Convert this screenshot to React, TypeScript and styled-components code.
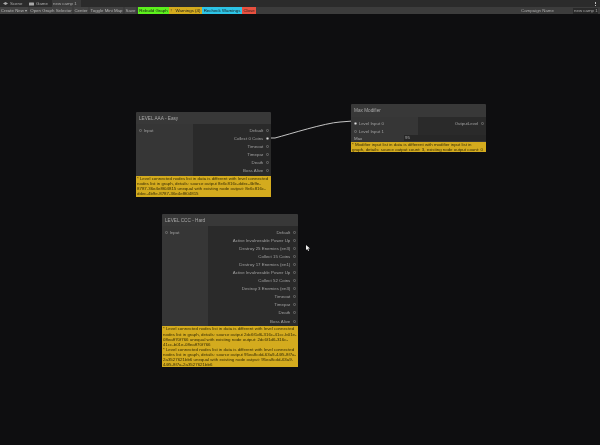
import styled, { createGlobalStyle } from 'styled-components';

const GlobalStyle = createGlobalStyle`
  html, body {
    margin: 0;
    padding: 0;
    background: #0e0e10;
    overflow: hidden;
  }
`;

const Page = styled.div`
  width: 600px;
  height: 445px;
  display: flex;
  flex-direction: column;
  font-family: "Liberation Sans", Arial, sans-serif;
  font-size: 4.4px;
  color: #ababab;
  background: #0e0e10;
  overflow: hidden;
  filter: blur(0.3px);
`;

const TabBar = styled.div`
  height: 7px;
  display: flex;
  align-items: stretch;
  background: #2b2b2b;
`;

const Tab = styled.div<{ $width: number; $active?: boolean }>`
  display: flex;
  align-items: center;
  gap: 2px;
  padding-left: ${({ $active }) => ($active ? '1px' : '3px')};
  width: ${({ $width }) => $width}px;
  background: ${({ $active }) => ($active ? '#3a3a3a' : 'transparent')};
  box-sizing: border-box;
`;

const TabIcon = styled.svg`
  width: 5px;
  height: 4px;
  fill: #a8a8a8;
`;

const MoreDots = styled.div`
  margin-left: auto;
  margin-right: 4px;
  align-self: center;
  width: 1px;
  height: 4px;
  background: repeating-linear-gradient(#bdbdbd 0 1px, transparent 1px 1.5px);
`;

const Toolbar = styled.div`
  height: 7px;
  display: flex;
  align-items: stretch;
  background: #3c3c3c;
`;

const ToolButton = styled.div<{ $width: number }>`
  display: flex;
  align-items: center;
  justify-content: center;
  width: ${({ $width }) => $width}px;
  margin-right: 2px;
  background: #434343;
  color: #b4b4b4;
  white-space: nowrap;
`;

const ColorButton = styled.div<{ $bg: string; $width: number }>`
  display: flex;
  align-items: center;
  justify-content: center;
  width: ${({ $width }) => $width}px;
  background: ${({ $bg }) => $bg};
  color: #1c1c1c;
  white-space: nowrap;
`;

const CampaignField = styled.div`
  margin-left: auto;
  display: flex;
  align-items: center;
  color: #a8a8a8;
  white-space: nowrap;
`;

const CampaignLabel = styled.span`
  width: 52px;
`;

const CampaignInput = styled.span`
  width: 25px;
  padding-left: 1px;
  box-sizing: border-box;
  background: #2a2a2a;
  line-height: 6px;
  margin-right: 2px;
`;

const Canvas = styled.div`
  position: relative;
  flex: 1;
`;

const Wire = styled.svg`
  position: absolute;
  left: 0;
  top: 0;
  width: 600px;
  height: 431px;
  pointer-events: none;
`;

const Node = styled.div<{ $x: number; $y: number; $width: number }>`
  position: absolute;
  left: ${({ $x }) => $x}px;
  top: ${({ $y }) => $y}px;
  width: ${({ $width }) => $width}px;
  display: flex;
  flex-direction: column;
`;

const NodeHeader = styled.div<{ $height: number }>`
  height: ${({ $height }) => $height}px;
  display: flex;
  align-items: center;
  padding-left: 3px;
  background: #383838;
  color: #a8a8a8;
  font-size: 4.7px;
  border-radius: 1px 1px 0 0;
`;

const NodeBody = styled.div`
  display: flex;
`;

const InColumn = styled.div<{ $width: number }>`
  width: ${({ $width }) => $width}px;
  display: flex;
  flex-direction: column;
  padding-top: 2px;
  background: #363636;
`;

const OutColumn = styled.div`
  flex: 1;
  display: flex;
  flex-direction: column;
  padding-top: 2px;
  padding-bottom: 1px;
  background: #2a2a2a;
`;

const PortRow = styled.div<{ $out?: boolean }>`
  height: 8.1px;
  display: flex;
  align-items: center;
  justify-content: flex-end;
  flex-direction: ${({ $out }) => ($out ? 'row' : 'row-reverse')};
  gap: 2.2px;
  padding: 0 2.5px;
  white-space: nowrap;
  color: #a0a0a0;
`;

const PinIcon = styled.svg`
  width: 3px;
  height: 3px;
  flex: none;
`;

const FieldRow = styled.div`
  height: 6.5px;
  display: flex;
  align-items: center;
  padding-left: 3px;
  background: #363636;
`;

const FieldLabel = styled.span`
  width: 50px;
`;

const FieldInput = styled.span`
  flex: 1;
  padding-left: 1px;
  line-height: 6px;
  background: #272727;
`;

const Warning = styled.div`
  background: #d4ab1e;
  color: #352c06;
  font-size: 4.4px;
  line-height: 5.1px;
  padding: 0.3px 1px;
`;

const Cursor = styled.svg`
  position: absolute;
  left: 306px;
  top: 231px;
  width: 4px;
  height: 6px;
`;

const aaaOutputs = ['Default', 'Collect 0 Coins', 'Timeout', 'Timepar', 'Death', 'Boss Alive'];
const cccOutputs = [
  'Default',
  'Active Invulnerable Power Up',
  'Destroy 25 Enemies (en3)',
  'Collect 15 Coins',
  'Destroy 17 Enemies (en1)',
  'Active Invulnerable Power Up',
  'Collect 52 Coins',
  'Destroy 3 Enemies (en3)',
  'Timeout',
  'Timepar',
  'Death',
  'Boss Alive',
];

function Pin({ filled }: { filled?: boolean }) {
  return (
    <PinIcon viewBox="0 0 6 6">
      <circle
        cx="3"
        cy="3"
        r="2.2"
        fill={filled ? '#dcdcdc' : 'none'}
        stroke="#a8a8a8"
        strokeWidth="0.9"
      />
    </PinIcon>
  );
}

function Port({ label, filled, input }: { label: string; filled?: boolean; input?: boolean }) {
  return (
    <PortRow $out={!input}>
      {label}
      <Pin filled={filled} />
    </PortRow>
  );
}

export default function App() {
  return (
    <Page>
      <GlobalStyle />
      <TabBar>
        <Tab $width={26}>
          <TabIcon viewBox="0 0 10 8"><path d="M5 0l5 3-5 3-5-3z" /></TabIcon>
          Scene
        </Tab>
        <Tab $width={26}>
          <TabIcon viewBox="0 0 10 8"><path d="M1 1h8a1 1 0 0 1 1 1v4a1 1 0 0 1-1 1H1a1 1 0 0 1-1-1V2a1 1 0 0 1 1-1z" /></TabIcon>
          Game
        </Tab>
        <Tab $width={29} $active>new camp 1</Tab>
        <MoreDots />
      </TabBar>
      <Toolbar>
        <ToolButton $width={28}>Create New ▾</ToolButton>
        <ToolButton $width={42}>Open Graph Selector</ToolButton>
        <ToolButton $width={14}>Center</ToolButton>
        <ToolButton $width={33}>Toggle Mini Map</ToolButton>
        <ToolButton $width={11}>Save</ToolButton>
        <ColorButton $bg="#5cf11c" $width={31}>Rebuild Graph</ColorButton>
        <ColorButton $bg="#d4ab1e" $width={33}>!&nbsp;&nbsp;&nbsp;Warnings (4)</ColorButton>
        <ColorButton $bg="#2dc4e6" $width={40}>Recheck Warnings</ColorButton>
        <ColorButton $bg="#e8503f" $width={14}>Close</ColorButton>
        <CampaignField>
          <CampaignLabel>Campaign Name</CampaignLabel>
          <CampaignInput>new camp 1</CampaignInput>
        </CampaignField>
      </Toolbar>
      <Canvas>
        <Wire viewBox="0 0 600 431">
          <path
            d="M268 124 L275 124 C 290 120 325 109 340 108 L353 107"
            fill="none"
            stroke="#d8d8d8"
            strokeWidth="0.9"
          />
        </Wire>

        <Node $x={136} $y={98} $width={135}>
          <NodeHeader $height={12}>LEVEL AAA - Easy</NodeHeader>
          <NodeBody>
            <InColumn $width={57}>
              <Port label="Input" input />
            </InColumn>
            <OutColumn>
              {aaaOutputs.map((label) => (
                <Port key={label} label={label} filled={label === 'Collect 0 Coins'} />
              ))}
            </OutColumn>
          </NodeBody>
          <Warning>
            * Level connected nodes list in data is different with level connected nodes list in graph, details: source output 8e6c816c-ddec-4b9e-8787-36e4e8f04815 unequal with existing node output: 8e6c816c-ddec-4b9e-8787-36e4e8f04815
          </Warning>
        </Node>

        <Node $x={351} $y={90} $width={135}>
          <NodeHeader $height={13}>Max Modifier</NodeHeader>
          <NodeBody>
            <InColumn $width={67}>
              <Port label="Level Input 0" filled input />
              <Port label="Level Input 1" input />
            </InColumn>
            <OutColumn>
              <Port label="OutputLevel" />
            </OutColumn>
          </NodeBody>
          <FieldRow>
            <FieldLabel>Max</FieldLabel>
            <FieldInput>95</FieldInput>
          </FieldRow>
          <Warning>
            * Modifier input list in data is different with modifier input list in graph, details: source output count: 3, existing node output count: 0
          </Warning>
        </Node>

        <Node $x={162} $y={200} $width={136}>
          <NodeHeader $height={12}>LEVEL CCC - Hard</NodeHeader>
          <NodeBody>
            <InColumn $width={46}>
              <Port label="Input" input />
            </InColumn>
            <OutColumn>
              {cccOutputs.map((label, i) => (
                <Port key={`${label}-${i}`} label={label} />
              ))}
            </OutColumn>
          </NodeBody>
          <Warning>
            * Level connected nodes list in data is different with level connected nodes list in graph, details: source output 2dc6f1d6-316c-41cc-b01e-08eaff70f766 unequal with existing node output: 2dc6f1d6-316c-41cc-b01e-08eaff70f766
            <br />
            * Level connected nodes list in data is different with level connected nodes list in graph, details: source output 95ea8cdd-63a9-44f5-8f7a-2a3527621bb6 unequal with existing node output: 95ea8cdd-63a9-44f5-8f7a-2a3527621bb6
          </Warning>
        </Node>

        <Cursor viewBox="0 0 8 12">
          <path d="M0 0v10l2.5-2.2L4.5 12l1.6-.8L4.2 7.2H8z" fill="#f2f2f2" />
        </Cursor>
      </Canvas>
    </Page>
  );
}
